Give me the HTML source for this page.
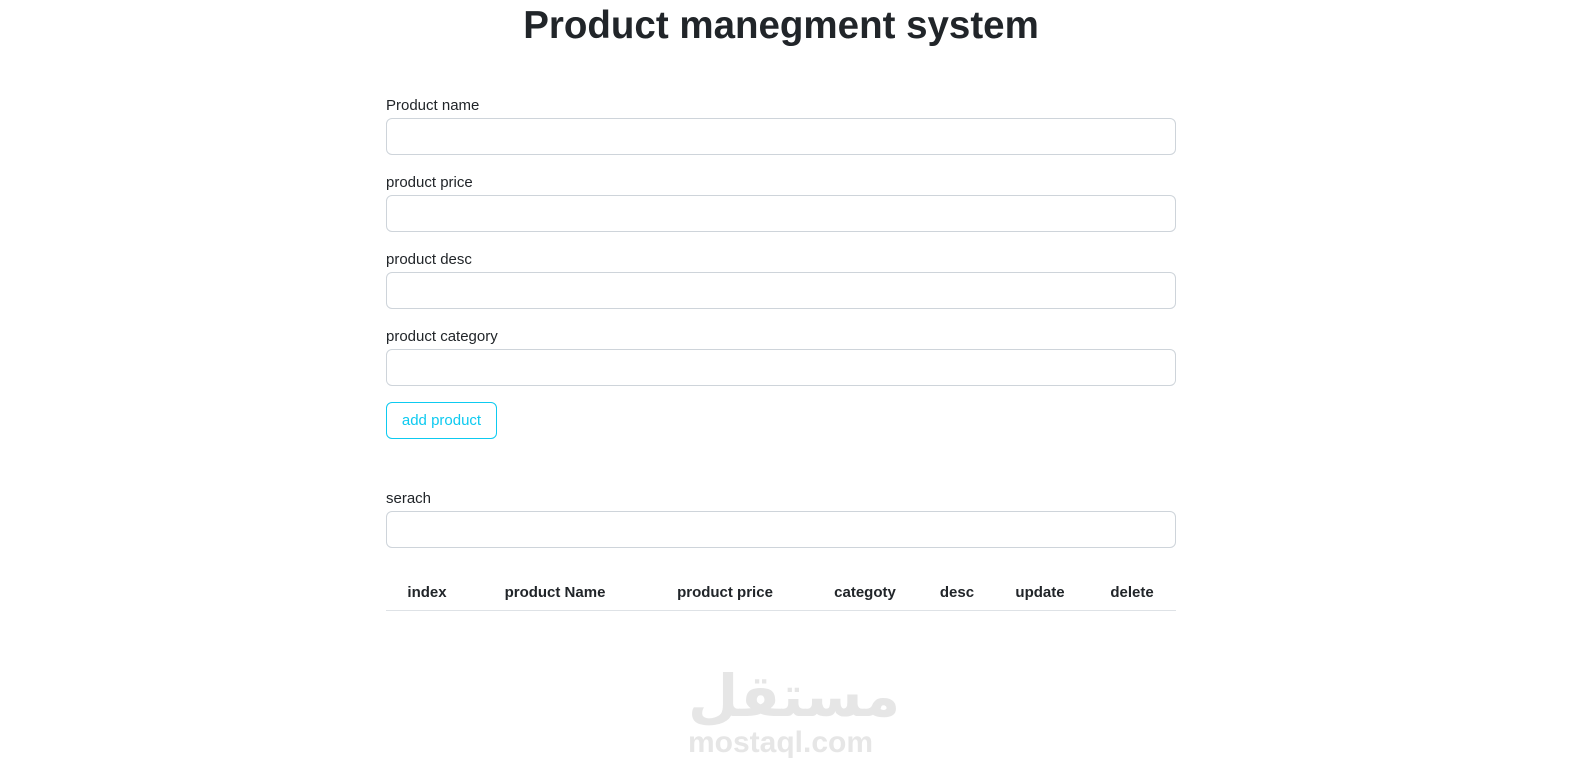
<!DOCTYPE html>
<html><head><style>
body{margin:0;background:#fff;font-family:"Liberation Sans",sans-serif;color:#212529;width:1588px;height:784px;position:relative;overflow:hidden}
h1{position:absolute;top:2px;left:0;width:1562px;text-align:center;margin:0;font-size:38.5px;font-weight:bold;line-height:48px}
.l{position:absolute;left:386px;font-size:15px;line-height:20px}
.i{position:absolute;left:386px;width:788px;height:35px;border:1px solid #ced4da;border-radius:6px}
.btn{position:absolute;left:386px;top:402px;width:109px;height:35px;border:1px solid #0dcaf0;border-radius:6px;color:#0dcaf0;font-size:15px;line-height:35px;text-align:center}
table{position:absolute;left:386px;top:574px;width:790px;border-collapse:collapse;font-size:15px}
th{font-weight:bold;height:36px;border-bottom:1px solid #dee2e6;padding:0;text-align:center}
.wm{position:absolute;left:688px;top:726px;font-size:30px;font-weight:bold;color:#e6e6e6;letter-spacing:0px}
.ar{position:absolute;left:688px;top:666px;font-size:58px;font-weight:bold;color:#e6e6e6;font-family:"DejaVu Sans",sans-serif;line-height:60px}
</style></head><body>
<h1>Product manegment system</h1>
<div class="l" style="top:96px">Product name</div><div class="i" style="top:118px"></div>
<div class="l" style="top:173px">product price</div><div class="i" style="top:195px"></div>
<div class="l" style="top:250px">product desc</div><div class="i" style="top:272px"></div>
<div class="l" style="top:327px">product category</div><div class="i" style="top:349px"></div>
<div class="btn">add product</div>
<div class="l" style="top:489px">serach</div><div class="i" style="top:511px"></div>
<table><tr><th style="width:82px">index</th><th style="width:174px">product Name</th><th style="width:166px">product price</th><th style="width:114px">categoty</th><th style="width:70px">desc</th><th style="width:96px">update</th><th>delete</th></tr></table>
<div class="ar">مستقل</div>
<div class="wm">mostaql.com</div>
</body></html>
